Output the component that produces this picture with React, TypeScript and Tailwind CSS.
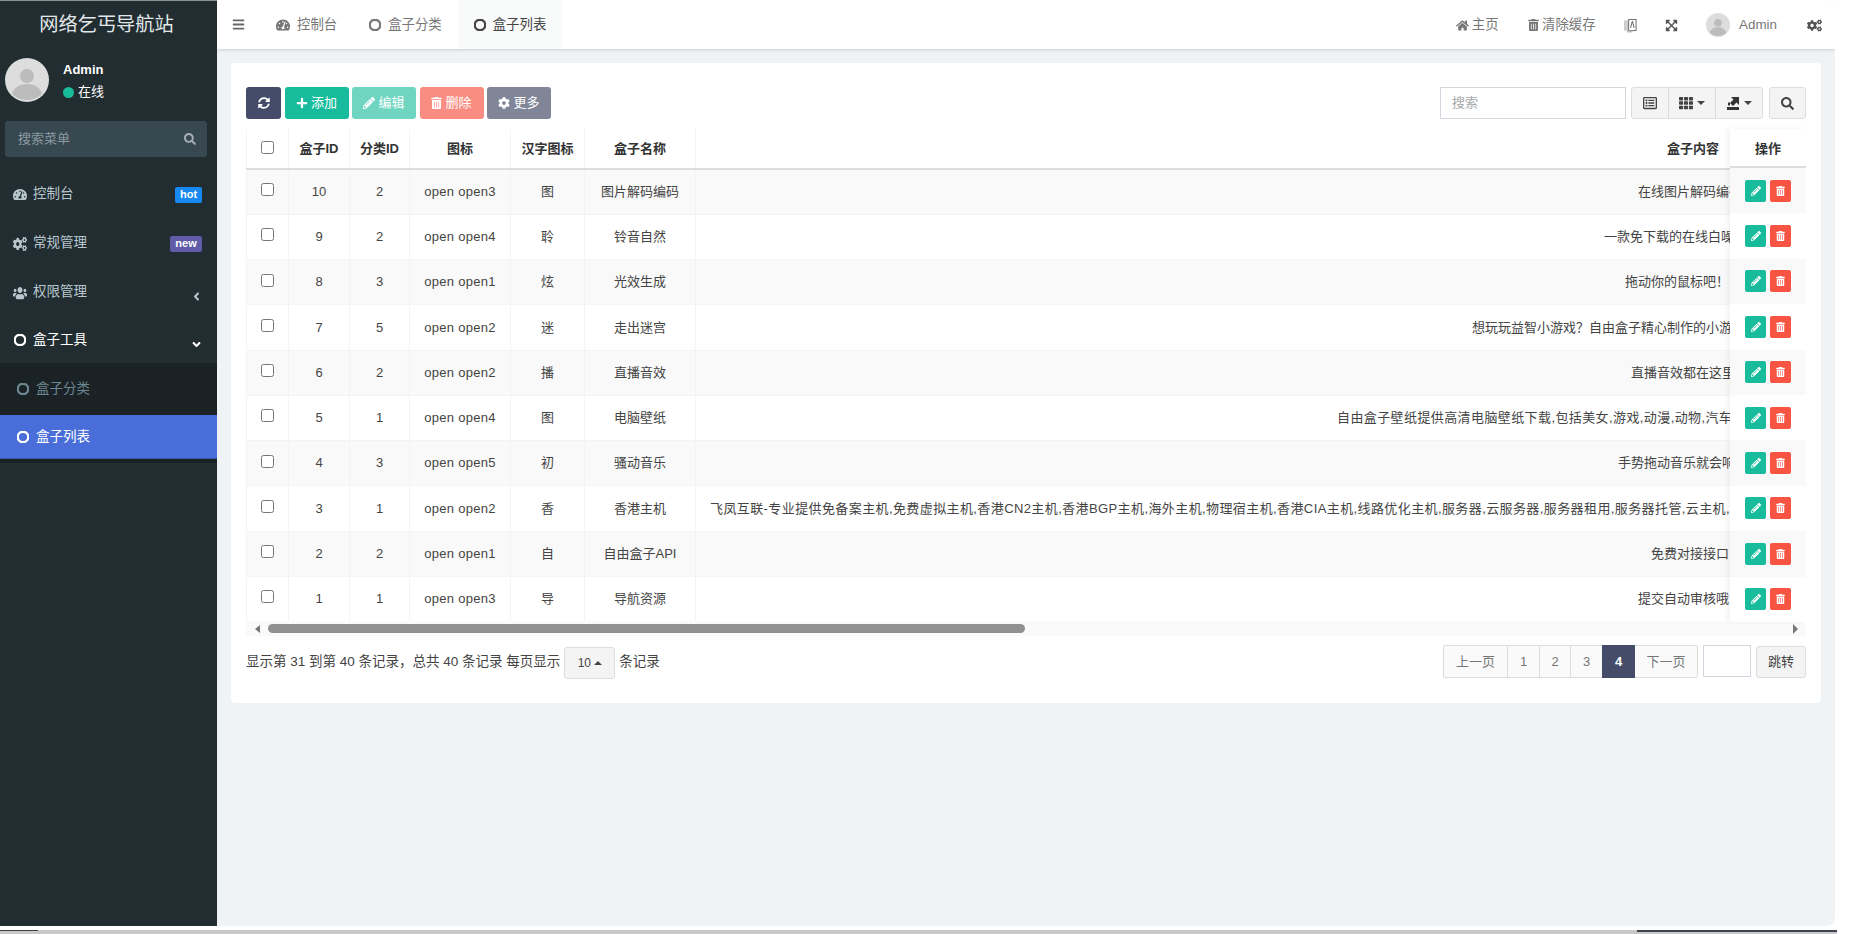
import type { ReactNode } from "react";
import {
  FaAngleDown,
  FaAngleLeft,
  FaBars,
  FaCog,
  FaCogs,
  FaExpandArrowsAlt,
  FaHome,
  FaPencilAlt,
  FaPlus,
  FaRegCircle,
  FaRegListAlt,
  FaSearch,
  FaSyncAlt,
  FaTachometerAlt,
  FaTh,
  FaTrashAlt,
  FaUsers,
} from "react-icons/fa";

const rows = [
  { id: 10, cat: 2, icon: "open open3", han: "图", name: "图片解码编码", pad: 942, track: 0, text: "在线图片解码编码" },
  { id: 9, cat: 2, icon: "open open4", han: "聆", name: "铃音自然", pad: 908, track: 0, text: "一款免下载的在线白噪音" },
  { id: 8, cat: 3, icon: "open open1", han: "炫", name: "光效生成", pad: 929, track: 0, text: "拖动你的鼠标吧！" },
  { id: 7, cat: 5, icon: "open open2", han: "迷", name: "走出迷宫", pad: 776, track: 0, text: "想玩玩益智小游戏？自由盒子精心制作的小游戏" },
  { id: 6, cat: 2, icon: "open open2", han: "播", name: "直播音效", pad: 935, track: 0, text: "直播音效都在这里" },
  { id: 5, cat: 1, icon: "open open4", han: "图", name: "电脑壁纸", pad: 641, track: 0.4, text: "自由盒子壁纸提供高清电脑壁纸下载,包括美女,游戏,动漫,动物,汽车" },
  { id: 4, cat: 3, icon: "open open5", han: "初", name: "骚动音乐", pad: 922, track: 0, text: "手势拖动音乐就会响" },
  {
    id: 3,
    cat: 1,
    icon: "open open2",
    han: "香",
    name: "香港主机",
    pad: 14,
    track: 0.4,
    text: "飞凤互联-专业提供免备案主机,免费虚拟主机,香港CN2主机,香港BGP主机,海外主机,物理宿主机,香港CIA主机,线路优化主机,服务器,云服务器,服务器租用,服务器托管,云主机,",
  },
  { id: 2, cat: 2, icon: "open open1", han: "自", name: "自由盒子API", pad: 955, track: 0, text: "免费对接接口" },
  { id: 1, cat: 1, icon: "open open3", han: "导", name: "导航资源", pad: 942, track: 0, text: "提交自动审核哦" },
];

const Avatar = ({ className }: { className: string }) => (
  <svg viewBox="0 0 44 44" className={className}>
    <circle cx="22" cy="22" r="22" fill="#dddddd" />
    <circle cx="22" cy="18" r="7" fill="#bcbcbc" />
    <path d="M7 36c2-7 8-10 15-10s13 3 15 10a22 22 0 0 1-30 0z" fill="#bcbcbc" />
  </svg>
);

const Caret = ({ up }: { up?: boolean }) => (
  <span
    className={
      up
        ? "inline-block w-0 h-0 border-x-[4px] border-x-transparent border-b-[4px] border-b-current"
        : "inline-block w-0 h-0 border-x-[4px] border-x-transparent border-t-[4px] border-t-current"
    }
  />
);

const MenuItem = ({
  icon,
  label,
  height,
  right,
  active,
}: {
  icon: ReactNode;
  label: string;
  height: string;
  right?: ReactNode;
  active?: boolean;
}) => (
  <div className={`${height} flex items-center pl-[13px] pr-[15px] ${active ? "text-white" : "text-[#b8c7ce]"}`}>
    <span className="w-[14px] flex justify-center">{icon}</span>
    <span className="ml-[6px] text-[13.5px]">{label}</span>
    <span className="ml-auto flex">{right}</span>
  </div>
);

const Sidebar = () => (
  <aside className="w-[217px] shrink-0 bg-[#222d32] flex flex-col">
    <div className="h-[49px] pr-[4px] border-t border-[#8a9296] flex items-center justify-center text-[19.2px] text-[#e3e8ea]">
      网络乞丐导航站
    </div>
    <div className="h-[72px] flex pl-[5px] pt-[9px]">
      <Avatar className="w-[44px] h-[44px]" />
      <div className="ml-[14px] pt-[2px]">
        <div className="text-[13px] font-bold text-white leading-[20px]">Admin</div>
        <div className="mt-[2px] flex items-center text-[13px] text-white leading-[20px]">
          <span className="w-[11px] h-[11px] rounded-full bg-[#18bc9c]" />
          <span className="ml-[4px]">在线</span>
        </div>
      </div>
    </div>
    <div className="ml-[5px] w-[202px] h-[36px] rounded-[3px] bg-[#374850] flex items-center justify-between pl-[13px] pr-[11px] text-[13px] text-[#8b9aa1]">
      <span>搜索菜单</span>
      <FaSearch className="w-[12px] h-[12px] text-[#a5afb4]" />
    </div>
    <nav className="mt-[13px]">
      <MenuItem
        height="h-[49px]"
        icon={<FaTachometerAlt className="w-[15px] h-[15px]" />}
        label="控制台"
        right={<span className="w-[27px] h-[16px] rounded-[2px] bg-[#1688f1] text-white text-[11px] font-bold leading-[15px] text-center">hot</span>}
      />
      <MenuItem
        height="h-[49px]"
        icon={<FaCogs preserveAspectRatio="none" className="w-[15px] h-[14px]" />}
        label="常规管理"
        right={<span className="w-[32px] h-[16px] rounded-[2px] bg-[#605ca8] text-white text-[11px] font-bold leading-[15px] text-center">new</span>}
      />
      <MenuItem
        height="h-[49px]"
        icon={<FaUsers preserveAspectRatio="none" className="w-[15px] h-[14px]" />}
        label="权限管理"
        right={<FaAngleLeft className="w-[13px] h-[13px] mt-[7px] -mr-[1px]" />}
      />
      <MenuItem
        height="h-[46px]"
        active
        icon={<FaRegCircle className="w-[12px] h-[12px] stroke-[50px]" />}
        label="盒子工具"
        right={<FaAngleDown className="w-[13px] h-[13px] mt-[8px] -mr-[1px]" />}
      />
      <div className="bg-[#1a2226] pb-[4px]">
        <div className="h-[52px] flex items-center pl-[17px] text-[13.5px] text-[#6d8792]">
          <FaRegCircle className="w-[12px] h-[12px] stroke-[50px]" />
          <span className="ml-[7px]">盒子分类</span>
        </div>
        <div className="h-[44px] pt-[1px] flex items-center pl-[17px] text-[13.5px] text-white bg-[#4a6ed9] border-b border-[#3a58b0]">
          <FaRegCircle className="w-[12px] h-[12px] stroke-[50px]" />
          <span className="ml-[7px]">盒子列表</span>
        </div>
      </div>
    </nav>
  </aside>
);

const Tab = ({ icon, label, active }: { icon: ReactNode; label: string; active?: boolean }) => (
  <div className={`h-full pt-[1px] flex items-center px-[16px] text-[13.4px] ${active ? "bg-[#f8f9f9] text-[#444444]" : "text-[#777777]"}`}>
    {icon}
    <span className="ml-[7px]">{label}</span>
  </div>
);

const TopBar = () => (
  <header className="h-[49px] shrink-0 bg-white shadow-[0_1px_3px_rgba(0,0,0,0.15)] flex items-center text-[#777777] relative">
    <FaBars className="ml-[15px] w-[13px] h-[13px] text-[#666666]" />
    <div className="ml-[15px] h-full flex">
      <Tab icon={<FaTachometerAlt className="w-[14px] h-[14px]" />} label="控制台" />
      <Tab icon={<FaRegCircle className="w-[12px] h-[12px] stroke-[50px]" />} label="盒子分类" />
      <Tab active icon={<FaRegCircle className="w-[12px] h-[12px] stroke-[50px]" />} label="盒子列表" />
    </div>
    <div className="ml-auto pt-[1px] flex items-center text-[13.4px]">
      <FaHome className="w-[13px] h-[13px]" />
      <span className="ml-[3px]">主页</span>
      <FaTrashAlt className="ml-[29px] w-[11px] h-[12px]" />
      <span className="ml-[3.500px]">清除缓存</span>
      <svg viewBox="0 0 14 15" className="ml-[28.400px] w-[13px] h-[15px]">
        <rect x="0" y="2" width="8" height="11" fill="#cccccc" />
        <rect x="5" y="1" width="8" height="12" fill="#ffffff" stroke="#666666" />
        <path d="M9 3l-2 7M9 3l2 7" stroke="#555555" fill="none" />
        <rect x="3" y="13" width="6" height="2" fill="#bbbbbb" />
      </svg>
      <FaExpandArrowsAlt className="ml-[28px] w-[13px] h-[13px] text-[#555555]" />
      <Avatar className="ml-[27.500px] w-[24px] h-[24px]" />
      <span className="ml-[9.500px]">Admin</span>
      <FaCogs className="ml-[30px] mr-[13px] w-[15px] h-[15px] text-[#555555]" />
    </div>
  </header>
);

const ToolBtn = ({ className, children }: { className: string; children: ReactNode }) => (
  <button className={`h-[32px] rounded-[3px] flex items-center justify-center text-white text-[13px] gap-[3px] ${className}`}>
    {children}
  </button>
);

const Toolbar = () => (
  <div className="h-[32px] flex justify-between">
    <div className="flex gap-[3.500px]">
      <ToolBtn className="w-[35px] bg-[#444c69]">
        <FaSyncAlt className="w-[12px] h-[12px]" />
      </ToolBtn>
      <ToolBtn className="w-[64px] bg-[#18bc9c]">
        <FaPlus className="w-[12px] h-[12px]" />
        添加
      </ToolBtn>
      <ToolBtn className="w-[64px] bg-[#70d5c0]">
        <FaPencilAlt className="w-[12px] h-[12px]" />
        编辑
      </ToolBtn>
      <ToolBtn className="w-[64px] bg-[#f98d82]">
        <FaTrashAlt className="w-[11px] h-[12px]" />
        删除
      </ToolBtn>
      <ToolBtn className="w-[64px] bg-[#808597]">
        <FaCog className="w-[12px] h-[12px]" />
        更多
      </ToolBtn>
    </div>
    <div className="flex text-[#444444]">
      <div className="w-[186px] h-[32px] border border-[#d2d6de] pl-[11px] flex items-center text-[13px] text-[#a8a8a8]">搜索</div>
      <div className="ml-[5px] flex h-[32px] rounded-[3px] border border-[#dddddd] bg-[#f4f4f4]">
        <div className="w-[36px] flex items-center justify-center">
          <FaRegListAlt className="w-[14px] h-[14px]" />
        </div>
        <div className="w-[47px] border-l border-[#dddddd] flex items-center justify-center gap-[4px]">
          <FaTh className="w-[14px] h-[14px]" />
          <Caret />
        </div>
        <div className="w-[47px] border-l border-[#dddddd] flex items-center justify-center gap-[4px]">
          <svg viewBox="0 0 14 14" className="w-[14px] h-[14px]">
            <path d="M5 1h8v8l-2.500-2.500L7 10 4 7l3.500-3.500zM1 11h12v3H1zM2 6.500h2v3H2z" fill="#333333" />
          </svg>
          <Caret />
        </div>
      </div>
      <div className="ml-[6px] w-[37px] h-[32px] rounded-[3px] border border-[#dddddd] bg-[#f4f4f4] flex items-center justify-center">
        <FaSearch className="w-[13px] h-[13px]" />
      </div>
    </div>
  </div>
);

const ActionColumn = () => (
  <div className="absolute right-0 top-0 w-[76px] h-[493px] bg-white shadow-[-3px_0_5px_rgba(0,0,0,0.05)] text-[13px] text-[#333333]">
    <div className="h-[39px] pt-[2px] border-b-2 border-[#dddddd] flex items-center justify-center font-bold">操作</div>
    {rows.map((r, i) => (
      <div key={r.id} className={`h-[45.4px] flex items-center pl-[15px] gap-[4px] ${i % 2 === 0 ? "bg-[#f9f9f9]" : "bg-white"}`}>
        <span className="w-[21px] h-[22px] rounded-[2px] bg-[#18bc9c] text-white flex items-center justify-center">
          <FaPencilAlt className="w-[10px] h-[10px]" />
        </span>
        <span className="w-[21px] h-[22px] rounded-[2px] bg-[#f75444] text-white flex items-center justify-center">
          <FaTrashAlt className="w-[9px] h-[10px]" />
        </span>
      </div>
    ))}
  </div>
);

const Table = () => (
  <div className="mt-[10px] relative w-[1560px] h-[506px]">
    <table className="table-fixed w-[1560px] border-collapse text-[13px] text-[#444444]">
      <colgroup>
        <col className="w-[42px]" />
        <col className="w-[61px]" />
        <col className="w-[60px]" />
        <col className="w-[101px]" />
        <col className="w-[74px]" />
        <col className="w-[111px]" />
        <col />
      </colgroup>
      <thead>
        <tr className="h-[40px] border-b-2 border-[#dddddd] text-[#333333] font-bold">
          <th className="border-r border-l border-[#f4f4f4]">
            <input type="checkbox" className="w-[13px] h-[13px] block mx-auto -mt-[3px]" />
          </th>
          <th className="border-r border-[#f4f4f4]">盒子ID</th>
          <th className="border-r border-[#f4f4f4]">分类ID</th>
          <th className="border-r border-[#f4f4f4]">图标</th>
          <th className="border-r border-[#f4f4f4]">汉字图标</th>
          <th className="border-r border-[#f4f4f4]">盒子名称</th>
          <th className="text-right pr-[87px]">盒子内容</th>
        </tr>
      </thead>
      <tbody>
        {rows.map((r, i) => (
          <tr key={r.id} className={`h-[45.25px] text-center border-b border-[#f4f4f4] ${i % 2 === 0 ? "bg-[#f9f9f9]" : "bg-white"}`}>
            <td className="border-r border-l border-[#f4f4f4]">
              <input type="checkbox" className="w-[13px] h-[13px] block mx-auto -mt-[4px]" />
            </td>
            <td className="border-r border-[#f4f4f4]">{r.id}</td>
            <td className="border-r border-[#f4f4f4]">{r.cat}</td>
            <td className="border-r border-[#f4f4f4] tracking-[0.3px]">{r.icon}</td>
            <td className="border-r border-[#f4f4f4]">{r.han}</td>
            <td className="border-r border-[#f4f4f4]">{r.name}</td>
            <td className="text-left whitespace-nowrap overflow-hidden" style={{ paddingLeft: r.pad, letterSpacing: r.track }}>
              {r.text}
            </td>
          </tr>
        ))}
      </tbody>
    </table>
    <div className="-mt-[1px] h-[15px] bg-[#fafafa] flex items-center pl-[9px] pr-[8px] text-[#777777]">
      <span className="w-0 h-0 border-y-[4px] border-y-transparent border-r-[5px] border-r-current" />
      <span className="ml-[8px] w-[757px] h-[9px] rounded-full bg-[#909090]" />
      <span className="ml-auto w-0 h-0 border-y-[5px] border-y-transparent border-l-[5px] border-l-current" />
    </div>
    <ActionColumn />
  </div>
);

const Pager = () => (
  <div className="mt-[10px] h-[34px] flex items-start justify-between text-[13.5px] text-[#444444]">
    <div className="h-[34px] flex items-center">
      <span>显示第 31 到第 40 条记录，总共 40 条记录 每页显示</span>
      <span className="mx-[4px] w-[51px] h-[32px] mt-[2px] rounded-[3px] border border-[#dddddd] bg-[#f4f4f4] flex items-center justify-center gap-[3px] text-[12px]">
        10 <Caret up />
      </span>
      <span>条记录</span>
    </div>
    <div className="flex items-start text-[#777777] text-[13px]">
      <div className="flex h-[33px] border border-[#dddddd] rounded-[2px] bg-[#fafafa]">
        <span className="w-[64px] border-r border-[#dddddd] flex items-center justify-center">上一页</span>
        <span className="w-[32px] border-r border-[#dddddd] flex items-center justify-center">1</span>
        <span className="w-[31px] border-r border-[#dddddd] flex items-center justify-center">2</span>
        <span className="w-[31px] flex items-center justify-center">3</span>
        <span className="w-[33px] -my-[1px] bg-[#444c69] text-white font-bold flex items-center justify-center">4</span>
        <span className="w-[62px] flex items-center justify-center">下一页</span>
      </div>
      <div className="ml-[5px] w-[48px] h-[32px] border border-[#d2d6de] bg-white" />
      <div className="ml-[5px] mt-[1px] w-[50px] h-[32px] rounded-[3px] border border-[#dddddd] bg-[#f4f4f4] text-[#444444] flex items-center justify-center">
        跳转
      </div>
    </div>
  </div>
);

export default function App() {
  return (
    <div className="w-[1849px] h-[934px] bg-white overflow-hidden font-['Liberation_Sans','Noto_Sans_CJK_SC',sans-serif]">
      <div className="w-[1835px] h-[926px] flex rounded-tr-[8px] rounded-br-[8px] overflow-hidden bg-[#f0f3f6]">
        <Sidebar />
        <main className="flex-1 flex flex-col min-w-0">
          <TopBar />
          <section className="mt-[14px] mx-[14px] h-[640px] rounded-[4px] bg-white px-[15px] pt-[24px]">
            <Toolbar />
            <Table />
            <Pager />
          </section>
        </main>
      </div>
      <div className="mt-[4px] w-[1837px] h-[4px] flex bg-[#c8c8c8]">
        <span className="w-[38px] h-[1px] bg-[#3a4048]" />
        <span className="ml-auto w-[200px] h-[2px] bg-[#3e4452]" />
      </div>
    </div>
  );
}
